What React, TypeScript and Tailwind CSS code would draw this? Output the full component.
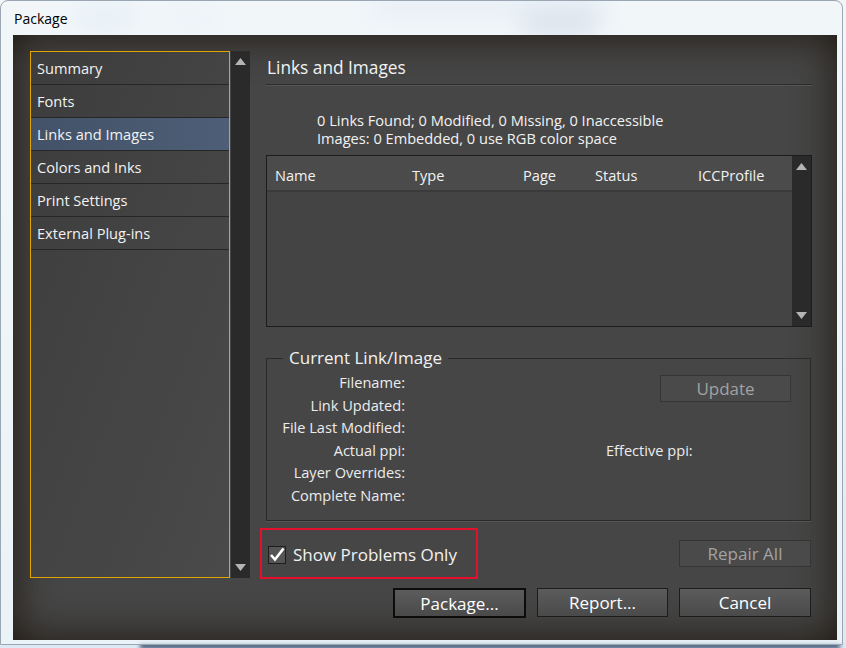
const navItems = [
  "Summary",
  "Fonts",
  "Links and Images",
  "Colors and Inks",
  "Print Settings",
  "External Plug-ins",
];

const fieldLabels = [
  "Filename:",
  "Link Updated:",
  "File Last Modified:",
  "Actual ppi:",
  "Layer Overrides:",
  "Complete Name:",
];

function Arrow({ down = false }: { down?: boolean }) {
  return (
    <svg width="11" height="7" viewBox="0 0 11 7">
      <path d={down ? "M0 0H11L5.5 7Z" : "M5.5 0L11 7H0Z"} fill="#b4b4b4" />
    </svg>
  );
}

function Scrollbar({ className }: { className: string }) {
  return (
    <div className={"flex flex-col items-center justify-between bg-[#2a2a2a] py-[7px] " + className}>
      <Arrow />
      <Arrow down />
    </div>
  );
}

function Button({
  label,
  className,
  disabled = false,
  primary = false,
}: {
  label: string;
  className: string;
  disabled?: boolean;
  primary?: boolean;
}) {
  const tone = disabled
    ? "border border-[#353535] bg-[#4a4a4a] text-[#a2a2a2]"
    : primary
      ? "border-2 border-[#0c0c0c] bg-gradient-to-b from-[#5c5c5c] to-[#4a4a4a] text-white"
      : "border border-[#1c1c1c] bg-gradient-to-b from-[#5c5c5c] to-[#4a4a4a] text-white";
  return (
    <button
      type="button"
      disabled={disabled}
      className={"flex items-center justify-center text-[17px] leading-none " + tone + " " + className}
    >
      {label}
    </button>
  );
}

export default function App() {
  return (
    <div className="relative h-[648px] w-[846px] overflow-hidden bg-gradient-to-b from-[#f3f6f9] via-[#e9f2f8] to-[#dbeaf4] font-['Open_Sans',sans-serif]">
      {/* blurred aero backdrop */}
      <div className="pointer-events-none absolute left-[70px] top-[2px] h-[30px] w-[70px] rounded-full bg-[#c9dcec] opacity-70 blur-md" />
      <div className="pointer-events-none absolute left-[160px] top-[6px] h-[26px] w-[60px] rounded-full bg-[#d3e1ee] opacity-60 blur-md" />
      <div className="pointer-events-none absolute left-[370px] top-[0px] h-[14px] w-[240px] rounded-full bg-[#8aa6d8] opacity-50 blur-md" />
      <div className="pointer-events-none absolute left-[520px] top-[14px] h-[20px] w-[80px] rounded-full bg-[#1e3a7a] opacity-40 blur-md" />
      <div className="pointer-events-none absolute bottom-0 left-[140px] h-[4px] w-[700px] bg-[#1a2c52] blur-[2px]" />

      <div className="relative flex h-[645px] w-[843px] flex-col rounded-t-[8px] border border-[#9aa7b3] bg-[#f1f6fa]/70">
        <div className="flex h-[34px] items-center pl-[13px] text-[14px] text-black">Package</div>

        <div className="ml-[12px] flex h-[605px] w-[824px] bg-[#464646] pl-[17px] pt-[16px] text-[#f2f2f2] shadow-[inset_0_0_40px_rgba(25,18,10,0.9)]">
          {/* left nav */}
          <div className="flex h-[527px] w-[220px]">
            <div className="w-[201px] border border-[#e3a400] bg-gradient-to-br from-[#3d3d3d] to-[#4a4a4a]">
              {navItems.map((item) => (
                <div
                  key={item}
                  className={
                    "flex h-[33px] items-center border-b border-[#262626] pl-[6px] pt-[2px] text-[14.6px] " +
                    (item === "Links and Images"
                      ? "bg-gradient-to-r from-[#435268] to-[#4d5e76]"
                      : "")
                  }
                >
                  {item}
                </div>
              ))}
            </div>
            <Scrollbar className="ml-[1px] w-[19px]" />
          </div>

          {/* right content */}
          <div className="ml-[16px] flex w-[546px] flex-col">
            <div className="flex h-[34px] items-center border-b border-[#2c2c2c] pl-[1px] text-[17.3px] shadow-[0_1px_0_#555]">
              Links and Images
            </div>

            <div className="mt-[26px] pl-[51px] text-[14.6px] leading-[18px]">
              <div>0 Links Found; 0 Modified, 0 Missing, 0 Inaccessible</div>
              <div>Images: 0 Embedded, 0 use RGB color space</div>
            </div>

            <div className="mt-[8px] flex h-[172px] border border-[#1c1c1c] bg-[#444444]">
              <div className="flex-1">
                <div className="flex h-[36px] items-center border-b-2 border-[#3a3a3a] bg-[#4b4b4b] pt-[6px] text-[14.6px]">
                  <div className="w-[145px] pl-[8px]">Name</div>
                  <div className="w-[111px]">Type</div>
                  <div className="w-[72px]">Page</div>
                  <div className="w-[103px]">Status</div>
                  <div>ICCProfile</div>
                </div>
              </div>
              <Scrollbar className="w-[19px]" />
            </div>

            <fieldset className="mt-[20px] h-[174px] w-[545px] border border-[#2a2a2a] shadow-[0_1px_0_#555]">
              <legend className="ml-[16px] px-[6px] text-[17px] leading-[22px]">Current Link/Image</legend>
              <div className="flex pt-[2px]">
                <div className="w-[138px] text-right text-[14.6px] leading-[22.5px] text-[#ececec]">
                  {fieldLabels.map((l) => (
                    <div key={l}>{l}</div>
                  ))}
                </div>
                <div className="flex flex-1 flex-col">
                  <Button label="Update" disabled className="mr-[19px] mt-[4px] h-[27px] w-[131px] self-end" />
                  <div className="ml-[201px] mt-[37px] text-[14.6px] leading-[22.5px] text-[#ececec]">Effective ppi:</div>
                </div>
              </div>
            </fieldset>

            <div className="mt-[7px] flex items-center justify-between">
              <label className="-ml-[6px] flex h-[51px] w-[218px] items-center border-2 border-[#e5102c] pl-[6px] pt-[2px]">
                <span className="flex h-[18px] w-[18px] items-center justify-center border border-[#1e1e1e] bg-[#555]">
                  <svg width="16" height="15" viewBox="0 0 16 15">
                    <path d="M2 8L6 12.5L14.5 1.5" fill="none" stroke="#ffffff" strokeWidth="2.6" />
                  </svg>
                </span>
                <span className="ml-[7px] text-[17px]">Show Problems Only</span>
              </label>
              <Button label="Repair All" disabled className="mr-[1px] h-[27px] w-[132px]" />
            </div>

            <div className="mt-[9px] flex justify-end gap-[11px] pr-[1px]">
              <Button label="Package..." primary className="h-[30px] w-[133px]" />
              <Button label="Report..." className="h-[29px] w-[131px]" />
              <Button label="Cancel" className="h-[29px] w-[132px]" />
            </div>
          </div>
        </div>
      </div>
    </div>
  );
}
